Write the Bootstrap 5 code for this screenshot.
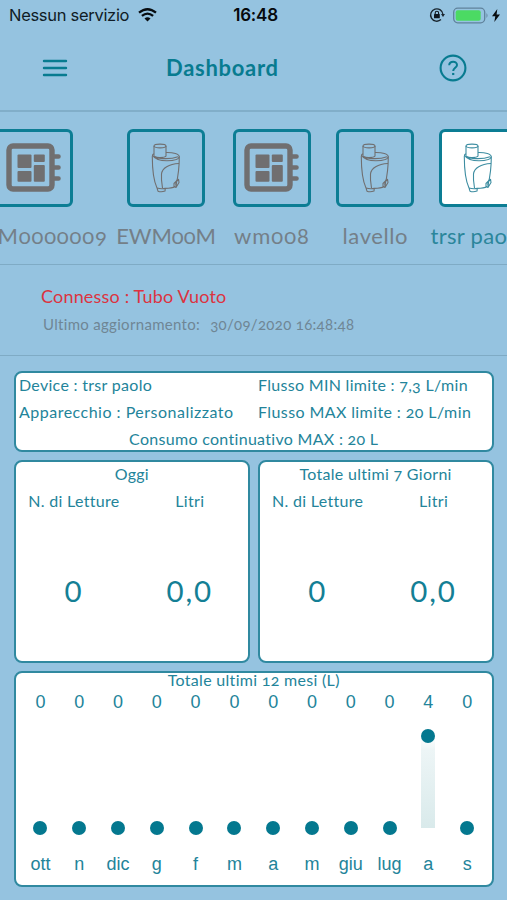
<!DOCTYPE html>
<html lang="it">
<head>
<meta charset="utf-8">
<meta name="viewport" content="width=device-width, initial-scale=1">
<title>Dashboard</title>
<link href="https://cdn.jsdelivr.net/npm/bootstrap@5.3.0/dist/css/bootstrap.min.css" rel="stylesheet">
<style>
:root{--teal:#0c7d94;--tealtext:#23849a;--rule:#7fabc5}
body{background:#95c3e0;font-family:Lato,"Open Sans",sans-serif;font-variant-numeric:oldstyle-nums;color:var(--tealtext);height:900px;overflow:hidden;letter-spacing:.3px;white-space:nowrap}
svg{display:block;flex:none}
.status-bar{height:30px;padding:0 7px 0 9px;font-family:Inter,sans-serif;font-variant-numeric:normal;color:#101c26;display:grid;grid-template-columns:1fr auto 1fr}
.carrier{font-size:16.5px;letter-spacing:-.3px}
.clock{font-size:17px;font-weight:600;letter-spacing:-.2px;color:#06090c;padding:1px 0 0 2px}
.title-bar{height:82px;border-bottom:2px solid #81aec9;padding:0 40px 4px 42px}
.title-text{font-size:22px;font-weight:700;letter-spacing:.7px;color:#087b90;margin:-2px auto 0 98px}
.device-strip{height:153px;border-bottom:1.500px solid var(--rule);padding-top:17px}
.device{flex:none;color:#706f70}
.device.wide{width:156px;margin-left:-44px}
.device.mid{width:108px}
.device.slim{width:102.700px}
.device.mid + .slim{width:104px}
.tile{width:78px;height:78px;border:3px solid var(--teal);border-radius:6px}
.device-name{font-size:22px;line-height:30px;margin-top:14px;color:#747f88}
.device.active .tile{background:#fff;color:#3d8da1}
.device.active .device-name{color:#2b869b}
.state{height:91px;border-bottom:1.500px solid var(--rule);padding:19px 0 0 41px}
.state-main{font-size:18px;line-height:25px;letter-spacing:.18px;color:#dc3340}
.state-sub{font-size:15px;line-height:20px;margin:5px 0 0 2px;color:#6f8695;letter-spacing:.31px}
.panel{background:#fff;border:2px solid #3089a0;border-radius:8px}
.panels{padding:15px 13.500px 0 14px;font-size:16px}
.info{height:81px;line-height:27px}
.info-text{margin-top:-2.500px}
.info .left-col{width:238px;padding-left:3px}
.reading{height:203px;line-height:27px;flex:1 1 0}
.reading-text{margin-top:-2px}
.figure{font-size:29.500px;line-height:40px;font-variant-numeric:lining-nums;letter-spacing:1.800px;padding-left:1.800px;color:#147f95;margin:57px 2px 0 0}
.chart{height:216px}
.chart-head{line-height:18px;margin-top:-2px}
.month{font-family:"Liberation Sans",Arial,sans-serif;font-variant-numeric:normal;font-size:18px;letter-spacing:0;line-height:22px;flex:1 1 0}
.plot{height:110px;margin-top:5px}
.stem{width:14px;flex:none;background:linear-gradient(#fff 0,#edf5f6 15%,#d9eaeb)}
.dot{width:14px;height:14px;flex:none;border-radius:50%;background:#04788f;transform:translateY(50%)}
.month-name{margin-top:25px}
</style>
</head>
<body>
<svg class="d-none">
<symbol id="board" viewBox="0 0 56 50">
<rect x="3" y="3" width="43" height="43" rx="4" fill="none" stroke="currentColor" stroke-width="5.400"/>
<g fill="currentColor"><rect x="11.500" y="11.500" width="14" height="13.500" rx="1"/><rect x="27.800" y="11.500" width="11" height="7.600" rx="1"/><rect x="11.500" y="28" width="14" height="10.800" rx="1"/><rect x="27.800" y="22" width="11" height="16.800" rx="1"/></g>
<path d="M47 13.500h5.500M47 24.500h5.500M47 35.500h5.500" stroke="currentColor" stroke-width="4.600" stroke-linecap="round"/>
</symbol>
<symbol id="meter" viewBox="0 0 30 50">
<g fill="none" stroke="currentColor" stroke-width="1.100" stroke-linejoin="round">
<ellipse cx="9" cy="3" rx="6" ry="1.900"/>
<path d="M3 3v10c1 2 11 2 12 0V3M3 10.500C1.500 11 1.300 12 1.300 13.500c0 12 1.200 24 4.700 31.500M15 9.500c7.300-.2 13.300 1.500 13.300 4.500 0 10-.8 18-3.300 28"/>
<path d="M1.400 12.500c3 4 8 5.300 14.500 5.300 7 0 12-1.300 12.400-4.300M4 13.700c5 2.600 16 2.600 23 0"/>
<path d="M28 20.500c-10 .5-17 4.500-17.500 10.500-.4 5 .1 9 1 14"/>
<path d="M6 45l1 3.200c2 .8 5 .6 7-.1l.3-2.600M6 45c3 .9 6 .8 8.300.4 4.500-.2 8-.9 9.700-1.700M27.500 36L23 40.500v3l2 1 3-5-.5-3.500M25 39v5"/>
</g>
</symbol>
</svg>

<header>
<div class="status-bar align-items-center">
<div class="d-flex align-items-center"><span class="carrier">Nessun servizio</span>
<svg width="19" height="14" viewBox="0 0 19 14" style="margin-left:9px"><g fill="none" stroke="#080d11" stroke-width="2.300"><path d="M1 4.700Q9.500-2.300 18 4.700"/><path d="M3.900 7.900Q9.500 3.300 15.100 7.900"/></g><path d="M6.500 10.400Q9.500 8 12.500 10.400L9.500 13.500z" fill="#080d11"/></svg></div>
<span class="clock">16:48</span>
<div class="d-flex align-items-center justify-content-end">
<svg width="16" height="16" viewBox="0 0 16 16"><path d="M12 12.600A6.200 6.200 0 1 1 14 7.500" fill="none" stroke="#19252e" stroke-width="1.300"/><path d="M12 7h4l-2 3z" fill="#19252e"/><rect x="5" y="7" width="5.800" height="4.300" rx=".6" fill="#101820"/><path d="M6.200 7.300V5.900a1.700 1.700 0 0 1 3.400 0v1.400" fill="none" stroke="#101820" stroke-width="1.100"/></svg>
<svg width="37" height="17" viewBox="0 0 37 17" style="margin-left:7px"><rect x="1.700" y="1.200" width="31" height="14.600" rx="4" fill="none" stroke="#60829b" stroke-width="1.300"/><rect x="3.700" y="3.200" width="25" height="10.600" rx="2" fill="#4bda63"/><path d="M34.500 6v5q2-2.500 0-5z" fill="#60829b"/></svg>
<svg width="8" height="13" viewBox="0 0 8 13" style="margin-left:3px"><path d="M5.300 0L0 7.300h3.300L2.300 13 8 5.400H4.600z" fill="#080d11"/></svg>
</div>
</div>
<nav class="title-bar d-flex align-items-center">
<svg width="26" height="18" viewBox="0 0 26 18"><path d="M2 2h22M2 9h22M2 16h22" stroke="#087b90" stroke-width="2.400" stroke-linecap="round"/></svg>
<span class="title-text">Dashboard</span>
<svg width="28" height="28" viewBox="0 0 28 28" fill="none" stroke="#087b90"><circle cx="14" cy="14" r="12.400" stroke-width="2.100"/><path d="M10.200 11.300c.2-4.700 7.800-4.600 7.800-.4 0 2.800-3.800 3-3.800 6.200" stroke-width="2"/><path d="M13.100 20h2.200" stroke-width="2.100"/></svg>
</nav>
</header>

<section class="device-strip d-flex">
<div class="device wide d-flex flex-column align-items-center"><div class="tile d-flex align-items-center justify-content-center"><svg width="56" height="50"><use href="#board"/></svg></div><div class="device-name" style="letter-spacing:.85px">EWM0000009</div></div>
<div class="device mid d-flex flex-column align-items-center"><div class="tile d-flex align-items-center justify-content-center"><svg width="30" height="50"><use href="#meter"/></svg></div><div class="device-name" style="letter-spacing:-.1px">EWM00M</div></div>
<div class="device slim d-flex flex-column align-items-center"><div class="tile d-flex align-items-center justify-content-center"><svg width="56" height="50"><use href="#board"/></svg></div><div class="device-name" style="letter-spacing:1px">wm008</div></div>
<div class="device slim d-flex flex-column align-items-center"><div class="tile d-flex align-items-center justify-content-center"><svg width="30" height="50"><use href="#meter"/></svg></div><div class="device-name" style="letter-spacing:.6px">lavello</div></div>
<div class="device slim active d-flex flex-column align-items-center"><div class="tile d-flex align-items-center justify-content-center"><svg width="30" height="50"><use href="#meter"/></svg></div><div class="device-name" style="letter-spacing:.3px">trsr paolo</div></div>
</section>

<section class="state">
<div class="state-main">Connesso : Tubo Vuoto</div>
<div class="state-sub"><span>Ultimo aggiornamento:</span><span style="margin-left:10px">30/09/2020 16:48:48</span></div>
</section>

<main class="panels">
<div class="panel info"><div class="info-text">
<div class="d-flex"><div class="left-col">Device : trsr paolo</div><div class="ps-1">Flusso MIN limite : 7,3 L/min</div></div>
<div class="d-flex"><div class="left-col" style="letter-spacing:.49px">Apparecchio : Personalizzato</div><div class="ps-1" style="letter-spacing:.4px">Flusso MAX limite : 20 L/min</div></div>
<div class="text-center">Consumo continuativo MAX : 20 L</div>
</div></div>
<div class="d-flex" style="gap:8px;padding:8px 0">
<div class="panel reading text-center"><div class="reading-text"><div>Oggi</div>
<div class="row g-0"><div class="col-6"><div>N. di Letture</div><div class="figure">0</div></div><div class="col-6"><div>Litri</div><div class="figure">0,0</div></div></div></div></div>
<div class="panel reading text-center"><div class="reading-text"><div>Totale ultimi 7 Giorni</div>
<div class="row g-0"><div class="col-6"><div>N. di Letture</div><div class="figure">0</div></div><div class="col-6"><div>Litri</div><div class="figure">0,0</div></div></div></div></div>
</div>
<div class="panel chart">
<div class="chart-head text-center">Totale ultimi 12 mesi (L)</div>
<div class="d-flex text-center" id="months" style="padding:2px 5px 0"></div>
</div>
</main>
<script src="https://cdn.jsdelivr.net/npm/bootstrap@5.3.0/dist/js/bootstrap.bundle.min.js"></script>
<script>
const data=[["ott",0],["n",0],["dic",0],["g",0],["f",0],["m",0],["a",0],["m",0],["giu",0],["lug",0],["a",4],["s",0]];
document.getElementById("months").innerHTML=data.map(([m,v])=>
`<div class="month"><div>${v}</div><div class="plot d-flex flex-column align-items-center justify-content-end"><div class="dot"></div><div class="stem" style="height:${v*23}px"></div></div><div class="month-name">${m}</div></div>`).join("");
</script>
</body>
</html>
